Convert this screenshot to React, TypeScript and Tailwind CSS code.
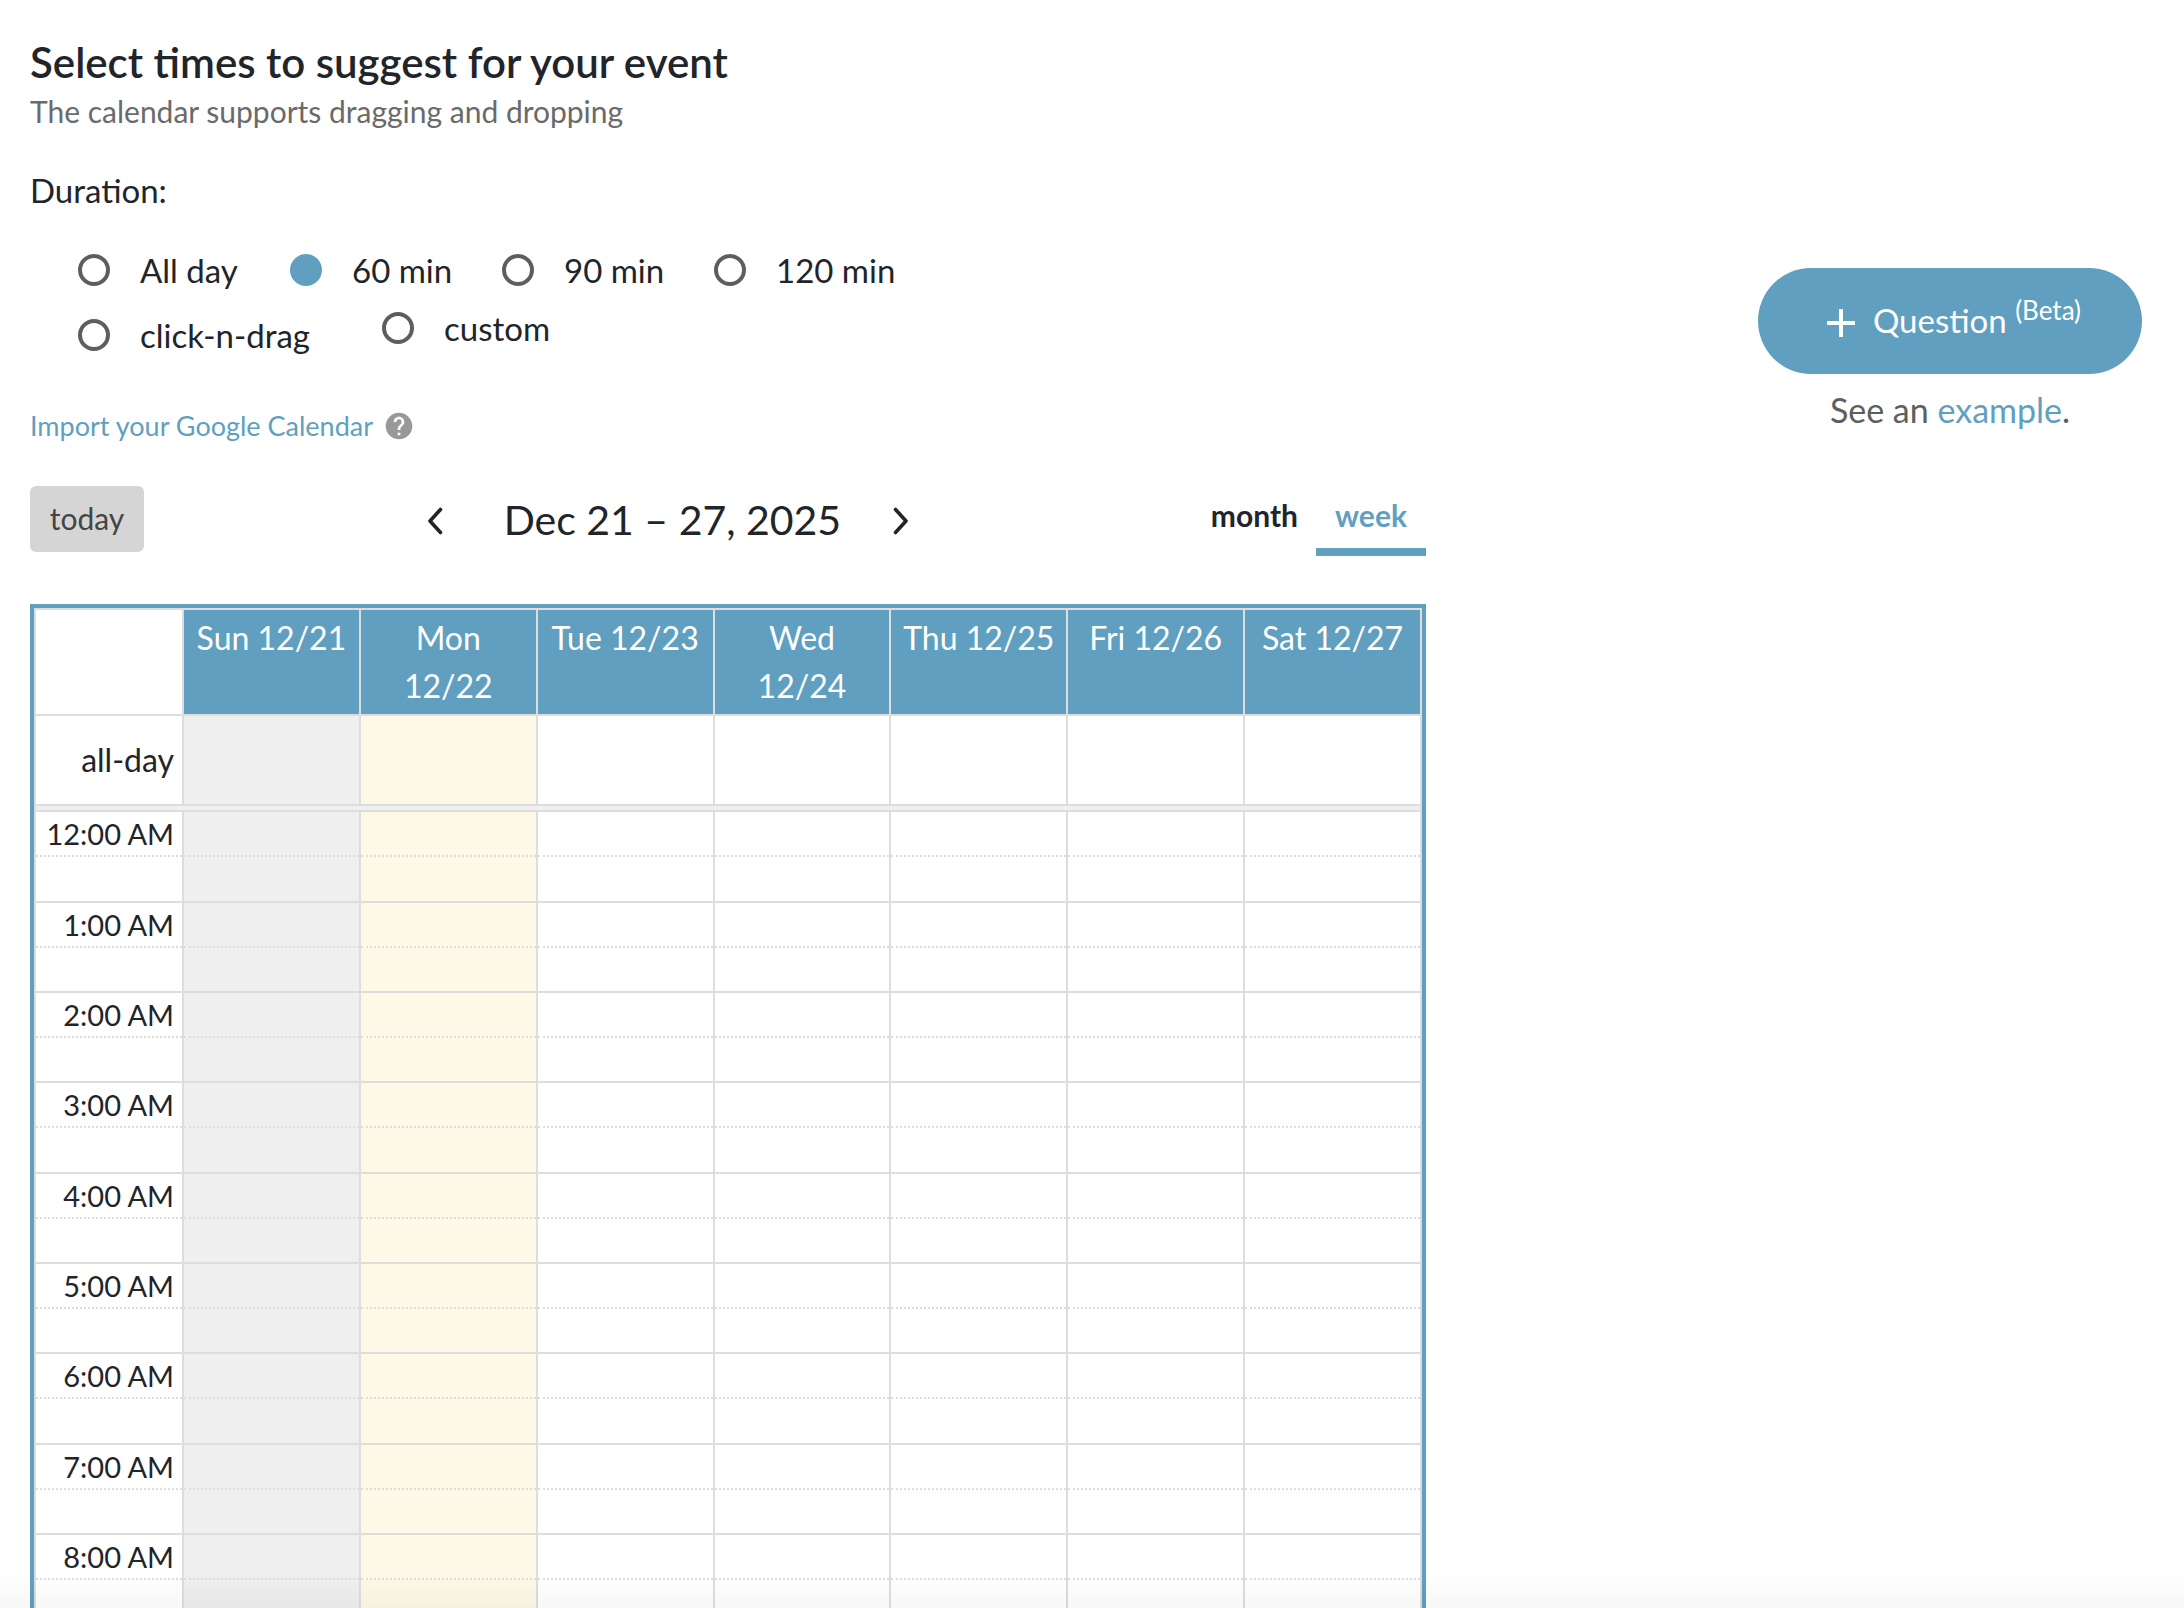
import React, { useState } from "react"
import { MdHelp } from "react-icons/md"

interface Day {
    label: string
    tone: string
}

interface DurationOption {
    value: string
    label: string
    className: string
}

const DAYS: Day[] = [
    { label: "Sun 12/21", tone: "bg-[#efefef]" },
    { label: "Mon 12/22", tone: "bg-[#fef9e7]" },
    { label: "Tue 12/23", tone: "bg-white" },
    { label: "Wed 12/24", tone: "bg-white" },
    { label: "Thu 12/25", tone: "bg-white" },
    { label: "Fri 12/26", tone: "bg-white" },
    { label: "Sat 12/27", tone: "bg-white" }
]

const HOURS = [
    "12:00 AM",
    "1:00 AM",
    "2:00 AM",
    "3:00 AM",
    "4:00 AM",
    "5:00 AM",
    "6:00 AM",
    "7:00 AM",
    "8:00 AM"
]

const FIRST_ROW: DurationOption[] = [
    { value: "all-day", label: "All day", className: "w-[212px]" },
    { value: "60", label: "60 min", className: "w-[212px]" },
    { value: "90", label: "90 min", className: "w-[212px]" },
    { value: "120", label: "120 min", className: "w-[212px]" }
]

const SECOND_ROW: DurationOption[] = [
    { value: "drag", label: "click-n-drag", className: "w-[304px] pt-[7px]" },
    { value: "custom", label: "custom", className: "" }
]

const Chevron: React.FC<{ flip?: boolean }> = ({ flip }) => (
    <svg viewBox="0 0 16 28" className="h-7 w-4" fill="none" stroke="currentColor" strokeWidth="3.6" strokeLinecap="round" strokeLinejoin="round">
        <path d={flip ? "M2.5 2.5 L13 14 L2.5 25.5" : "M13.5 2.5 L3 14 L13.5 25.5"} />
    </svg>
)

const DurationPicker: React.FC = () => {
    const [duration, setDuration] = useState("60")

    const renderOption = (option: DurationOption) => (
        <label key={option.value} className={`flex items-center gap-[30px] text-[33px] leading-[48px] ${option.className}`}>
            <input
                type="radio"
                name="duration"
                value={option.value}
                checked={duration === option.value}
                onChange={() => setDuration(option.value)}
                className="size-8 shrink-0 appearance-none rounded-full border-4 border-[#5e5e5e] checked:border-[#609fc0] checked:bg-[#609fc0]"
            />
            {option.label}
        </label>
    )

    return (
        <fieldset>
            <legend className="text-[33px] leading-[48px]">Duration:</legend>
            <div className="flex flex-col gap-[10px] pt-8 pl-12">
                <div className="flex">{FIRST_ROW.map(renderOption)}</div>
                <div className="flex items-start">{SECOND_ROW.map(renderOption)}</div>
            </div>
        </fieldset>
    )
}

const Toolbar: React.FC = () => (
    <div className="flex h-[70px] items-start justify-between">
        <button type="button" className="h-[66px] w-[114px] rounded-md bg-[#d5d5d5] pb-0.5 text-[30px] text-[#444]">
            today
        </button>
        <div className="flex h-[70px] items-center">
            <button type="button" aria-label="Previous week">
                <Chevron />
            </button>
            <h2 className="w-[450px] pb-0.5 pl-2 text-center text-[41px] leading-[48px]">Dec 21 – 27, 2025</h2>
            <button type="button" aria-label="Next week">
                <Chevron flip />
            </button>
        </div>
        <div className="flex text-[30px] font-bold">
            <button type="button" className="h-[70px] border-b-8 border-transparent px-[18px] pb-1">
                month
            </button>
            <button type="button" className="h-[70px] w-[110px] border-b-8 border-[#609fc0] pb-1 text-[#609fc0]">
                week
            </button>
        </div>
    </div>
)

const WeekGrid: React.FC = () => (
    <div className="border-4 border-[#609fc0]">
        <table className="w-full table-fixed border-collapse">
            <colgroup>
                <col className="w-[148px]" />
                {DAYS.map((day) => (
                    <col key={day.label} />
                ))}
            </colgroup>
            <thead>
                <tr className="h-[106px]">
                    <td className="border-2 border-[#ddd]" />
                    {DAYS.map((day) => (
                        <th
                            key={day.label}
                            scope="col"
                            className="border-2 border-[#ddd] bg-[#609fc0] px-2 pt-1 align-top text-[32px] leading-[48px] font-normal text-white"
                        >
                            {day.label}
                        </th>
                    ))}
                </tr>
            </thead>
            <tbody>
                <tr className="h-[90px]">
                    <th scope="row" className="border-2 border-[#ddd] px-2 text-right text-[32px] font-normal">
                        all-day
                    </th>
                    {DAYS.map((day) => (
                        <td key={day.label} className={`border-2 border-[#ddd] ${day.tone}`} />
                    ))}
                </tr>
                <tr className="h-[6px]">
                    <td colSpan={8} className="border-2 border-[#ddd] bg-[#efefef] p-0" />
                </tr>
                {HOURS.map((hour, index) => (
                    <React.Fragment key={hour}>
                        <tr className="h-[45px]">
                            <th scope="row" className="border-x-2 border-t-2 border-[#ddd] px-2 py-0 text-right text-[29px] leading-[42px] font-normal whitespace-nowrap">
                                {hour}
                            </th>
                            {DAYS.map((day) => (
                                <td key={day.label} className={`border-x-2 border-t-2 border-[#ddd] p-0 ${day.tone}`} />
                            ))}
                        </tr>
                        {/* every third hour takes the spare pixel, so an hour averages a third over 90px */}
                        <tr className={index % 3 === 0 ? "h-[46px]" : "h-[45px]"}>
                            <td className="border-x-2 border-t-2 border-[#ddd] p-0 [border-top-style:dotted]" />
                            {DAYS.map((day) => (
                                <td key={day.label} className={`border-x-2 border-t-2 border-[#ddd] p-0 [border-top-style:dotted] ${day.tone}`} />
                            ))}
                        </tr>
                    </React.Fragment>
                ))}
            </tbody>
        </table>
    </div>
)

const QuestionPanel: React.FC = () => (
    <div className="flex flex-col items-center">
        <button type="button" className="flex h-[106px] w-[384px] items-center justify-center gap-[18px] rounded-full bg-[#609fc0] pl-2 text-[33px] text-white">
            <svg viewBox="0 0 28 28" className="mt-1 size-7" stroke="currentColor" strokeWidth="4">
                <path d="M14 0 V28 M0 14 H28" />
            </svg>
            <span>
                Question <sup className="text-[26px]">(Beta)</sup>
            </span>
        </button>
        <p className="mt-3 text-[34px] leading-[48px] text-[#5e5e5e]">
            See an{" "}
            <a href="#example" className="text-[#609fc0]">
                example
            </a>
            .
        </p>
    </div>
)

export default function App() {
    return (
        <div className="relative flex h-screen overflow-hidden bg-white font-[Lato,'Open_Sans',sans-serif] text-[#212529]">
            <main className="w-2/3 px-[30px] pt-[38px]">
                <h1 className="text-[42px] leading-[48px] font-semibold">Select times to suggest for your event</h1>
                <p className="mt-1 mb-[34px] text-[30px] leading-[42px] text-[#6a6a6a]">The calendar supports dragging and dropping</p>
                <DurationPicker />
                <div className="mt-[47px] mb-10 flex h-10 items-center gap-[10px] text-[27px]">
                    <a href="#import" className="text-[#609fc0]">
                        Import your Google Calendar
                    </a>
                    <MdHelp className="size-8 text-[#999]" />
                </div>
                <Toolbar />
                <div className="pt-12">
                    <WeekGrid />
                </div>
            </main>
            <aside className="flex w-1/3 justify-end pt-[268px] pr-[42px]">
                <QuestionPanel />
            </aside>
            <div className="pointer-events-none absolute inset-x-0 bottom-0 h-9 bg-linear-to-t from-black/3 to-transparent" />
        </div>
    )
}
